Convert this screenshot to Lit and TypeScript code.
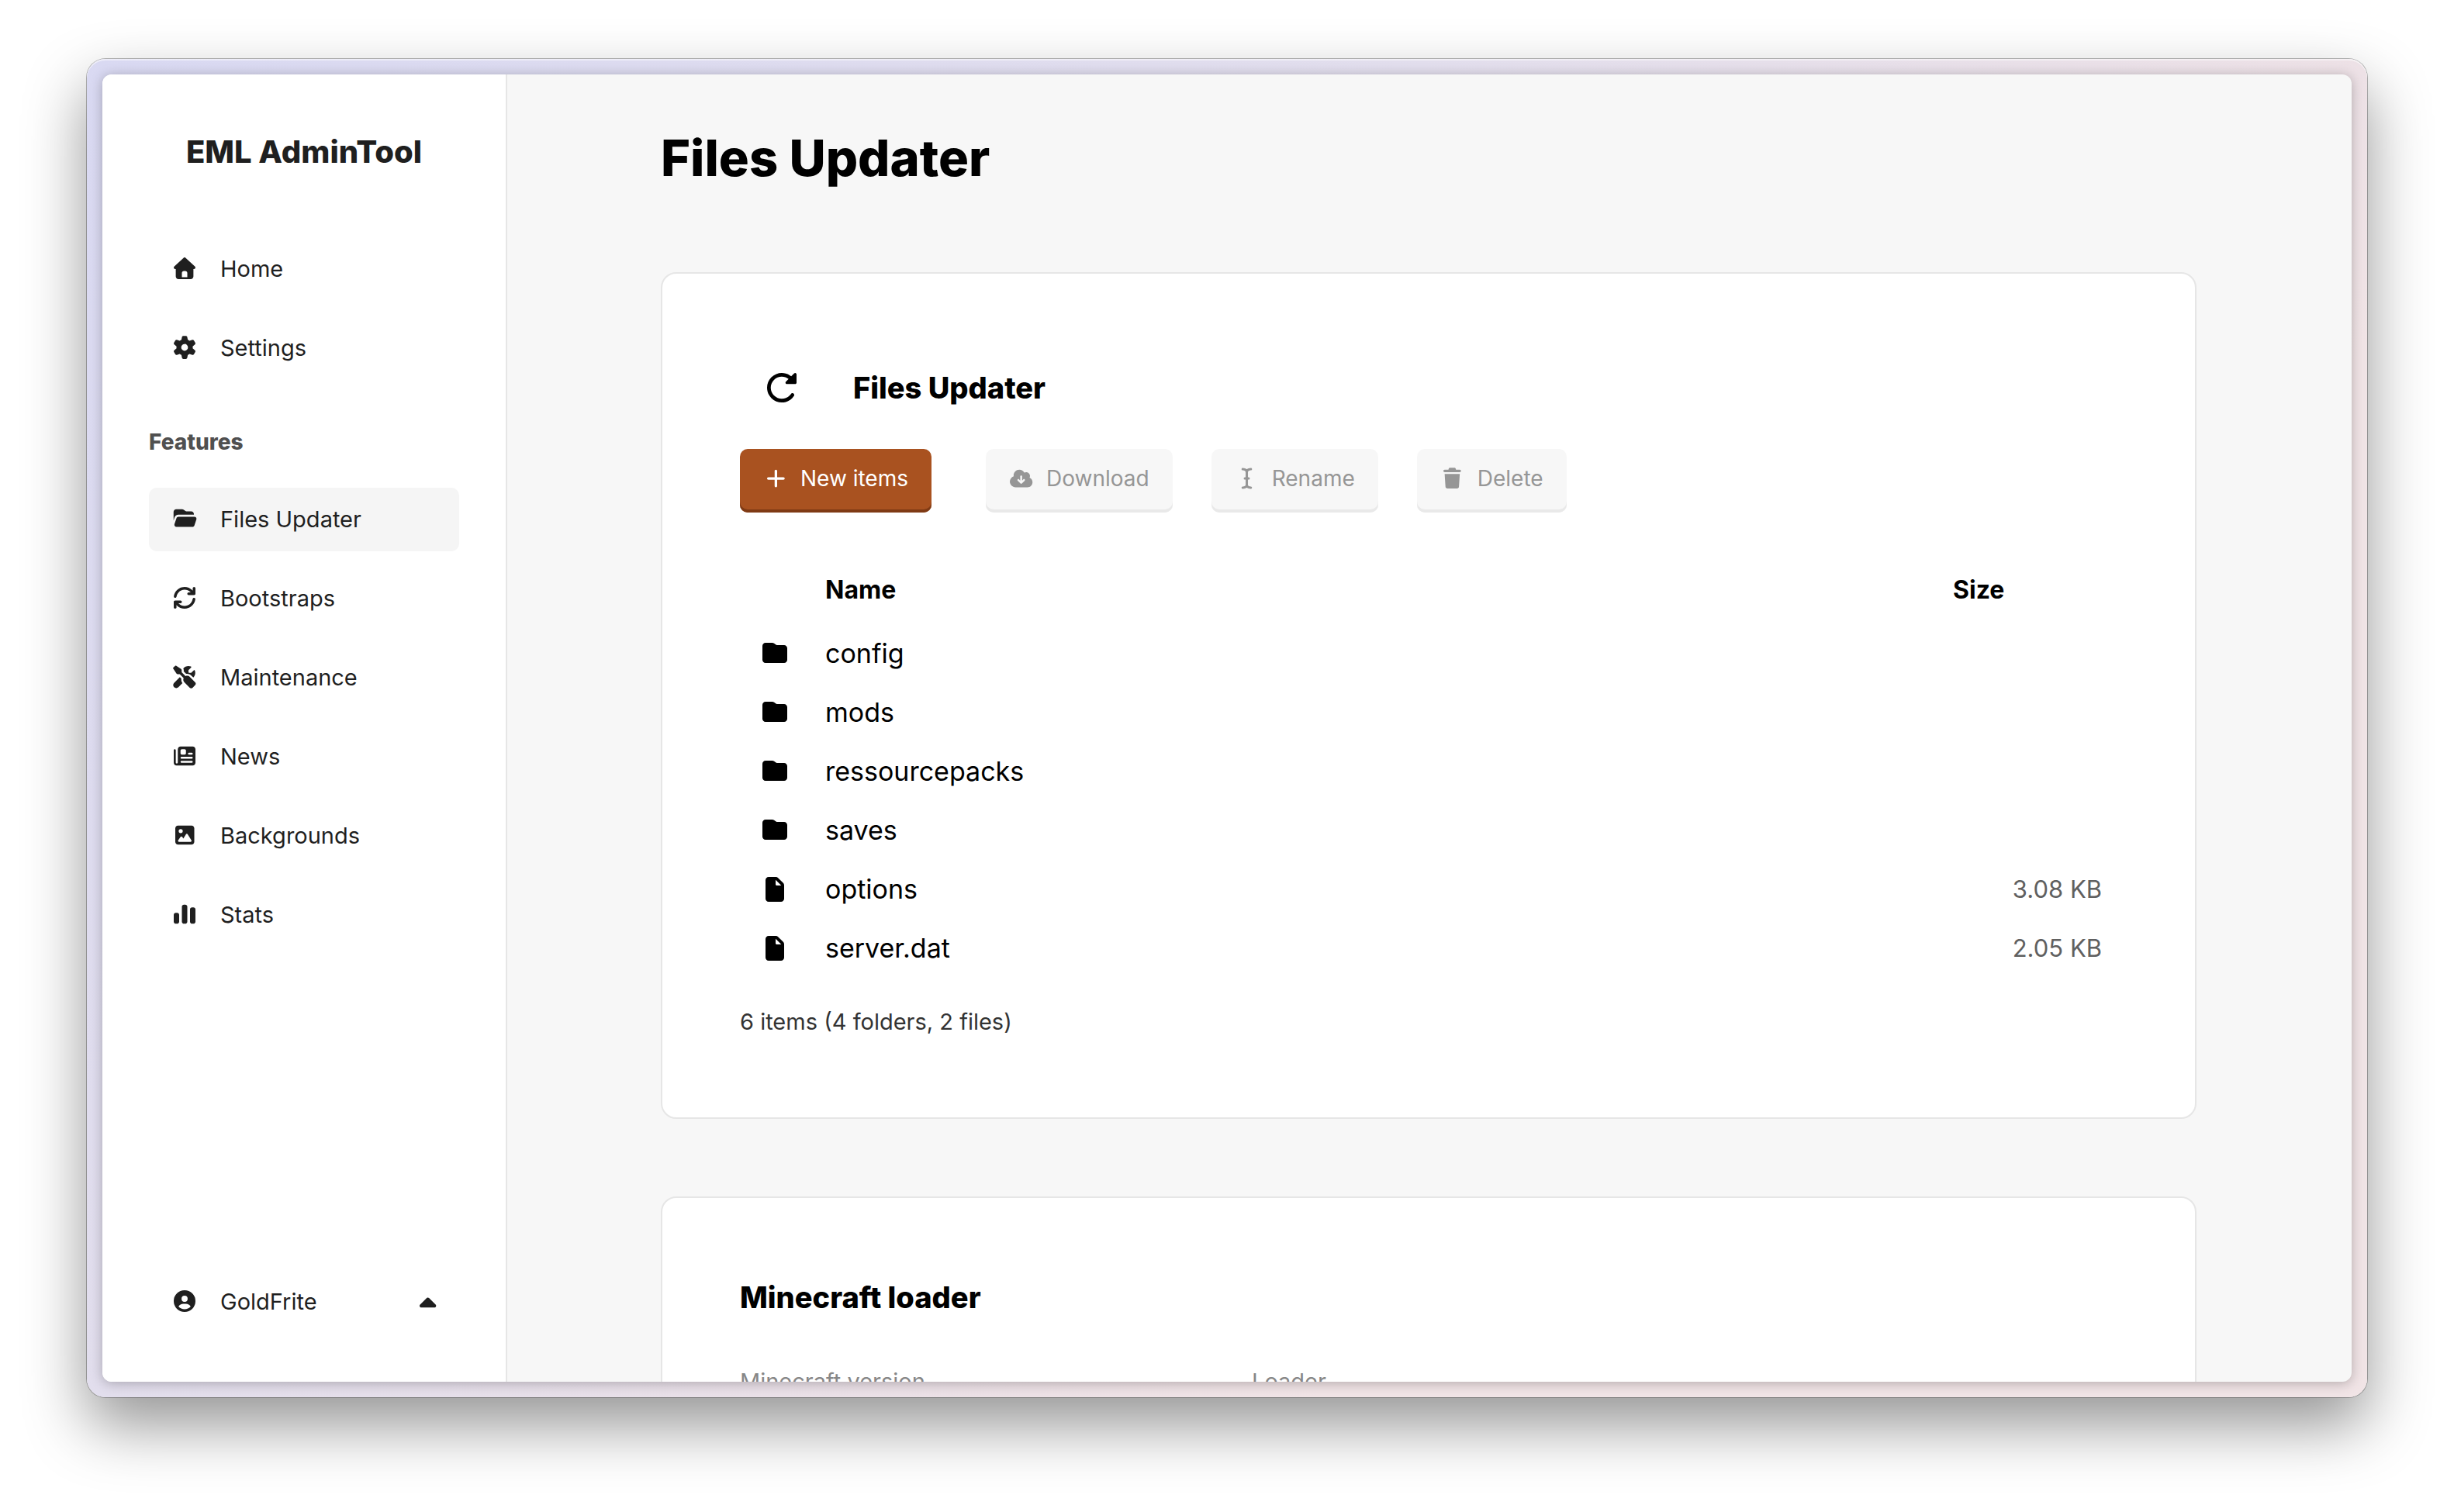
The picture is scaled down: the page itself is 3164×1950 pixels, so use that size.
import { LitElement, html, css, svg } from "lit";
import { customElement, property, state } from "lit/decorators.js";
import { classMap } from "lit/directives/class-map.js";

interface IconShape {
  w: number;
  d?: string;
  stroke?: string;
}

const ICONS: Record<string, IconShape> = {
  house: {
    w: 512,
    d: "M277.8 8.6c-12.3-11.4-31.3-11.4-43.5 0l-224 208c-9.6 9-12.8 22.9-8 35.1S18.8 272 32 272l16 0 0 176c0 35.3 28.7 64 64 64l288 0c35.3 0 64-28.7 64-64l0-176 16 0c13.2 0 25-8.1 29.8-20.3s1.6-26.2-8-35.1l-224-208zM240 320l32 0c26.5 0 48 21.5 48 48l0 96-128 0 0-96c0-26.5 21.5-48 48-48z",
  },
  gear: {
    w: 512,
    d: "M195.1 9.5C198.1-5.3 211.2-16 226.4-16l59.8 0c15.2 0 28.3 10.7 31.3 25.5L332 79.5c14.1 6 27.3 13.7 39.3 22.8l67.8-22.5c14.4-4.8 30.2 1.2 37.8 14.4l29.9 51.8c7.6 13.2 4.9 29.8-6.5 39.9L447 233.3c.9 7.4 1.3 15 1.3 22.7s-.5 15.3-1.3 22.7l53.4 47.5c11.4 10.1 14 26.8 6.5 39.9l-29.9 51.8c-7.6 13.1-23.4 19.2-37.8 14.4l-67.8-22.5c-12.1 9.1-25.3 16.7-39.3 22.8l-14.4 69.9c-3.1 14.9-16.2 25.5-31.3 25.5l-59.8 0c-15.2 0-28.3-10.7-31.3-25.5l-14.4-69.9c-14.1-6-27.2-13.7-39.3-22.8L73.5 432.3c-14.4 4.8-30.2-1.2-37.8-14.4L5.8 366.1c-7.6-13.2-4.9-29.8 6.5-39.9l53.4-47.5c-.9-7.4-1.3-15-1.3-22.7s.5-15.3 1.3-22.7L12.3 185.8c-11.4-10.1-14-26.8-6.5-39.9L35.7 94.1c7.6-13.2 23.4-19.2 37.8-14.4l67.8 22.5c12.1-9.1 25.3-16.7 39.3-22.8L195.1 9.5zM256.3 336a80 80 0 1 0 -.6-160 80 80 0 1 0 .6 160z",
  },
  folderOpen: {
    w: 576,
    d: "M56 225.6L32.4 296.2 32.4 96c0-35.3 28.7-64 64-64l138.7 0c13.8 0 27.3 4.5 38.4 12.8l38.4 28.8c5.5 4.2 12.3 6.4 19.2 6.4l117.3 0c35.3 0 64 28.7 64 64l0 16-365.4 0c-41.3 0-78 26.4-91.1 65.6zM477.8 448L99 448c-32.8 0-55.9-32.1-45.5-63.2l48-144C108 221.2 126.4 208 147 208l378.8 0c32.8 0 55.9 32.1 45.5 63.2l-48 144c-6.5 19.6-24.9 32.8-45.5 32.8z",
  },
  sync: {
    w: 512,
    d: "M65.9 228.5c13.3-93 93.4-164.5 190.1-164.5 53 0 101 21.5 135.8 56.2 .2 .2 .4 .4 .6 .6l7.6 7.2-47.9 0c-17.7 0-32 14.3-32 32s14.3 32 32 32l128 0c17.7 0 32-14.3 32-32l0-128c0-17.7-14.3-32-32-32s-32 14.3-32 32l0 53.4-11.3-10.7C390.5 28.6 326.5 0 256 0 127 0 20.3 95.4 2.6 219.5 .1 237 12.2 253.2 29.7 255.7s33.7-9.7 36.2-27.1zm443.5 64c2.5-17.5-9.7-33.7-27.1-36.2s-33.7 9.7-36.2 27.1c-13.3 93-93.4 164.5-190.1 164.5-53 0-101-21.5-135.8-56.2-.2-.2-.4-.4-.6-.6l-7.6-7.2 47.9 0c17.7 0 32-14.3 32-32s-14.3-32-32-32L32 320c-8.5 0-16.7 3.4-22.7 9.5S-.1 343.7 0 352.3l1 127c.1 17.7 14.6 31.9 32.3 31.7S65.2 496.4 65 478.7l-.4-51.5 10.7 10.1c46.3 46.1 110.2 74.7 180.7 74.7 129 0 235.7-95.4 253.4-219.5z",
  },
  tools: {
    w: 576,
    d: "M70.8-6.7c5.4-5.4 13.8-6.2 20.2-2L209.9 70.5c8.9 5.9 14.2 15.9 14.2 26.6l0 49.6 90.8 90.8c33.3-15 73.9-8.9 101.2 18.5L542.2 382.1c18.7 18.7 18.7 49.1 0 67.9l-60.1 60.1c-18.7 18.7-49.1 18.7-67.9 0L288.1 384c-27.4-27.4-33.5-67.9-18.5-101.2l-90.8-90.8-49.6 0c-10.7 0-20.7-5.3-26.6-14.2L23.4 58.9c-4.2-6.3-3.4-14.8 2-20.2L70.8-6.7zm145 303.5c-6.3 36.9 2.3 75.9 26.2 107.2l-94.9 95c-28.1 28.1-73.7 28.1-101.8 0s-28.1-73.7 0-101.8l135.4-135.5 35.2 35.1zM384.1 0c20.1 0 39.4 3.7 57.1 10.5 10 3.8 11.8 16.5 4.3 24.1L388.8 91.3c-3 3-4.7 7.1-4.7 11.3l0 41.4c0 8.8 7.2 16 16 16l41.4 0c4.2 0 8.3-1.7 11.3-4.7l56.7-56.7c7.6-7.5 20.3-5.7 24.1 4.3 6.8 17.7 10.5 37 10.5 57.1 0 43.2-17.2 82.3-45 111.1l-49.1-49.1c-33.1-33-78.5-45.7-121.1-38.4l-56.8-56.8 0-29.7-.2-5c-.8-12.4-4.4-24.3-10.5-34.9 29.4-35 73.4-57.2 122.7-57.3z",
  },
  newspaper: {
    w: 512,
    d: "M0 416L0 120c0-13.3 10.7-24 24-24s24 10.7 24 24l0 288c0 13.3 10.7 24 24 24s24-10.7 24-24L96 96c0-35.3 28.7-64 64-64l288 0c35.3 0 64 28.7 64 64l0 320c0 35.3-28.7 64-64 64L64 480c-35.3 0-64-28.7-64-64zM160 128l0 64c0 17.7 14.3 32 32 32l64 0c17.7 0 32-14.3 32-32l0-64c0-17.7-14.3-32-32-32l-64 0c-17.7 0-32 14.3-32 32zM360 176a24 24 0 1 0 0 48l64 0a24 24 0 1 0 0-48zM184 272a24 24 0 1 0 0 48l240 0a24 24 0 1 0 0-48zM184 368a24 24 0 1 0 0 48l240 0a24 24 0 1 0 0-48z",
  },
  image: {
    w: 448,
    d: "M64 32C28.7 32 0 60.7 0 96L0 416c0 35.3 28.7 64 64 64l320 0c35.3 0 64-28.7 64-64l0-320c0-35.3-28.7-64-64-64L64 32zm64 80a48 48 0 1 1 0 96 48 48 0 1 1 0-96zM272 224c8.4 0 16.1 4.4 20.5 11.5l88 144c4.5 7.4 4.7 16.7 .5 24.3S368.7 416 360 416L88 416c-8.9 0-17.2-5-21.3-12.9s-3.5-17.5 1.6-24.8l56-80c4.5-6.4 11.8-10.2 19.7-10.2s15.2 3.8 19.7 10.2l26.4 37.8 61.4-100.5c4.4-7.1 12.1-11.5 20.5-11.5z",
  },
  chart: {
    w: 512,
    d: "M240 32l32 0c26.5 0 48 21.5 48 48l0 352c0 26.5-21.5 48-48 48l-32 0c-26.5 0-48-21.5-48-48l0-352c0-26.5 21.5-48 48-48zM48 224l32 0c26.5 0 48 21.5 48 48l0 160c0 26.5-21.5 48-48 48l-32 0c-26.5 0-48-21.5-48-48L0 272c0-26.5 21.5-48 48-48zM432 96l32 0c26.5 0 48 21.5 48 48l0 288c0 26.5-21.5 48-48 48l-32 0c-26.5 0-48-21.5-48-48l0-288c0-26.5 21.5-48 48-48z",
  },
  user: {
    w: 512,
    d: "M399 384.2C376.9 345.8 335.4 320 288 320l-64 0c-47.4 0-88.9 25.8-111 64.2 35.2 39.2 86.2 63.8 143 63.8s107.8-24.7 143-63.8zM0 256a256 256 0 1 1 512 0 256 256 0 1 1 -512 0zm256 16a72 72 0 1 0 0-144 72 72 0 1 0 0 144z",
  },
  caretUp: {
    w: 320,
    d: "M140.3 135.2c12.6-10.3 31.1-9.5 42.8 2.2l128 128c9.2 9.2 11.9 22.9 6.9 34.9S301.4 320 288.5 320l-256 0c-12.9 0-24.6-7.8-29.6-19.8S.7 274.5 9.9 265.4l128-128 2.4-2.2z",
  },
  rotate: {
    w: 512,
    d: "M488 192l-144 0c-9.7 0-18.5-5.8-22.2-14.8s-1.7-19.3 5.2-26.2l46.7-46.7c-75.3-58.6-184.3-53.3-253.5 15.9-75 75-75 196.5 0 271.5s196.5 75 271.5 0c8.2-8.2 15.5-16.9 21.9-26.1 10.1-14.5 30.1-18 44.6-7.9s18 30.1 7.9 44.6c-8.5 12.2-18.2 23.8-29.1 34.7-100 100-262.1 100-362 0S-25 175 75 75c94.3-94.3 243.7-99.6 344.3-16.2L471 7c6.9-6.9 17.2-8.9 26.2-5.2S512 14.3 512 24l0 144c0 13.3-10.7 24-24 24z",
  },
  plus: {
    w: 448,
    d: "M256 64c0-17.7-14.3-32-32-32s-32 14.3-32 32l0 160-160 0c-17.7 0-32 14.3-32 32s14.3 32 32 32l160 0 0 160c0 17.7 14.3 32 32 32s32-14.3 32-32l0-160 160 0c17.7 0 32-14.3 32-32s-14.3-32-32-32l-160 0 0-160z",
  },
  cloud: {
    w: 576,
    d: "M144 480c-79.5 0-144-64.5-144-144 0-63.4 41-117.2 97.9-136.5-1.3-7.7-1.9-15.5-1.9-23.5 0-79.5 64.5-144 144-144 55.4 0 103.5 31.3 127.6 77.1 14.2-8.3 30.8-13.1 48.4-13.1 53 0 96 43 96 96 0 15.7-3.8 30.6-10.5 43.7 44 20.3 74.5 64.7 74.5 116.3 0 70.7-57.3 128-128 128l-304 0zM377 313c9.4-9.4 9.4-24.6 0-33.9s-24.6-9.4-33.9 0l-31 31 0-102.1c0-13.3-10.7-24-24-24s-24 10.7-24 24l0 102.1-31-31c-9.4-9.4-24.6-9.4-33.9 0s-9.4 24.6 0 33.9l72 72c9.4 9.4 24.6 9.4 33.9 0l72-72z",
  },
  cursor: {
    w: 256,
    stroke: "M24 20C80 24 128 46 128 96L128 416C128 466 80 488 24 492M232 20C176 24 128 46 128 96M128 416C128 466 176 488 232 492M80 256L176 256",
  },
  trash: {
    w: 448,
    d: "M136.7 5.9L128 32 32 32C14.3 32 0 46.3 0 64S14.3 96 32 96l384 0c17.7 0 32-14.3 32-32s-14.3-32-32-32l-96 0-8.7-26.1C306.9-7.2 294.7-16 280.9-16L167.1-16c-13.8 0-26 8.8-30.4 21.9zM416 144L32 144 53.1 467.1C54.7 492.4 75.7 512 101 512L347 512c25.3 0 46.3-19.6 47.9-44.9L416 144z",
  },
  folder: {
    w: 512,
    d: "M64 448l384 0c35.3 0 64-28.7 64-64l0-240c0-35.3-28.7-64-64-64L298.7 80c-6.9 0-13.7-2.2-19.2-6.4L241.1 44.8C230 36.5 216.5 32 202.7 32L64 32C28.7 32 0 60.7 0 96L0 384c0 35.3 28.7 64 64 64z",
  },
  file: {
    w: 384,
    d: "M0 64C0 28.7 28.7 0 64 0L213.5 0c17 0 33.3 6.7 45.3 18.7L365.3 125.3c12 12 18.7 28.3 18.7 45.3L384 448c0 35.3-28.7 64-64 64L64 512c-35.3 0-64-28.7-64-64L0 64zm208-5.5l0 93.5c0 13.3 10.7 24 24 24L325.5 176 208 58.5z",
  },
};

/** Draws one glyph, one em high and centred in a box set by the host's width. */
@customElement("app-icon")
export class AppIcon extends LitElement {
  @property() name = "";

  static styles = css`
    :host {
      display: inline-flex;
      justify-content: center;
      align-items: center;
      flex: none;
      height: 1em;
      line-height: 1;
    }
    .glyph {
      display: block;
      height: 1em;
      flex: none;
      overflow: visible;
      fill: currentColor;
      fill-rule: evenodd;
    }
    .line {
      fill: none;
      stroke: currentColor;
      stroke-width: 60;
      stroke-linecap: round;
      stroke-linejoin: round;
    }
  `;

  render() {
    const icon = ICONS[this.name];
    if (!icon) return null;
    return html`<svg class="glyph" viewBox="0 0 ${icon.w} 512" aria-hidden="true">
      ${icon.d ? svg`<path d=${icon.d}></path>` : svg`<path class="line" d=${icon.stroke}></path>`}
    </svg>`;
  }
}

interface NavItem {
  icon: string;
  label: string;
}

const MAIN_NAV: NavItem[] = [
  { icon: "house", label: "Home" },
  { icon: "gear", label: "Settings" },
];

const FEATURE_NAV: NavItem[] = [
  { icon: "folderOpen", label: "Files Updater" },
  { icon: "sync", label: "Bootstraps" },
  { icon: "tools", label: "Maintenance" },
  { icon: "newspaper", label: "News" },
  { icon: "image", label: "Backgrounds" },
  { icon: "chart", label: "Stats" },
];

@customElement("app-sidebar")
export class AppSidebar extends LitElement {
  @state() private current = "Files Updater";

  static styles = css`
    :host {
      display: flex;
      flex-direction: column;
      box-sizing: border-box;
      flex: none;
      width: 522px;
      padding: 70px 60px 62px;
      border-right: 2px solid #e6e6e6;
      background: #fff;
      color: #1f1f1f;
    }
    .brand {
      margin: 0 0 80px;
      font-size: 40px;
      line-height: 60px;
      font-weight: 800;
      text-align: center;
      white-space: nowrap;
    }
    .group {
      display: flex;
      flex-direction: column;
      gap: 20px;
    }
    .caption {
      margin: 59px 0 38px;
      font-size: 28px;
      line-height: 42px;
      font-weight: 800;
      color: #505050;
    }
    .item {
      display: flex;
      align-items: center;
      box-sizing: border-box;
      width: 100%;
      height: 82px;
      padding: 0 30px 2px;
      border: 0;
      border-radius: 10px;
      background: none;
      color: inherit;
      font: inherit;
      font-size: 29px;
      text-align: left;
      text-decoration: none;
      cursor: pointer;
    }
    .active {
      background: #f5f5f5;
    }
    .icon {
      width: 32px;
      margin-right: 30px;
      font-size: 28px;
    }
    .account {
      margin-top: auto;
    }
    .caret {
      margin: 8px 0 0 auto;
      font-size: 34px;
    }
  `;

  private link(item: NavItem) {
    const active = item.label === this.current;
    return html`<a
      href="#"
      class=${classMap({ item: true, active })}
      aria-current=${active ? "page" : "false"}
      @click=${(e: Event) => {
        e.preventDefault();
        this.current = item.label;
      }}
      ><app-icon class="icon" name=${item.icon}></app-icon>${item.label}</a
    >`;
  }

  render() {
    return html`
      <h2 class="brand">EML AdminTool</h2>
      <nav class="group">${MAIN_NAV.map((i) => this.link(i))}</nav>
      <h3 class="caption">Features</h3>
      <nav class="group">${FEATURE_NAV.map((i) => this.link(i))}</nav>
      <button class="item account" type="button">
        <app-icon class="icon" name="user"></app-icon>GoldFrite
        <app-icon class="caret" name="caretUp"></app-icon>
      </button>
    `;
  }
}

interface FileEntry {
  name: string;
  folder: boolean;
  size?: string;
}

const FILES: FileEntry[] = [
  { name: "config", folder: true },
  { name: "mods", folder: true },
  { name: "ressourcepacks", folder: true },
  { name: "saves", folder: true },
  { name: "options", folder: false, size: "3.08 KB" },
  { name: "server.dat", folder: false, size: "2.05 KB" },
];

@customElement("app-files")
export class AppFiles extends LitElement {
  static styles = css`
    :host {
      display: block;
    }
    .head {
      display: flex;
      align-items: center;
      gap: 38px;
      height: 94px;
      margin-bottom: 32px;
    }
    .refresh {
      display: flex;
      align-items: center;
      justify-content: center;
      width: 108px;
      height: 94px;
      padding: 0;
      border: 0;
      background: none;
      color: #000;
      font-size: 38px;
      cursor: pointer;
    }
    .title {
      margin: 0;
      font-size: 38px;
      line-height: 56px;
      font-weight: 800;
    }
    .actions {
      display: flex;
      gap: 50px;
    }
    .button {
      display: flex;
      align-items: center;
      gap: 16px;
      box-sizing: border-box;
      height: 82px;
      padding: 0 30px 6px;
      border: 0;
      border-radius: 10px;
      background: #f7f7f7;
      box-shadow: inset 0 -4px #e9e9e9;
      color: #969696;
      font: inherit;
      font-size: 28px;
      white-space: nowrap;
    }
    .primary {
      margin-right: 20px;
      background: #a95220;
      box-shadow: inset 0 -4px #7f3a14;
      color: #fff;
      cursor: pointer;
    }
    .mark {
      width: 32px;
      font-size: 26px;
    }
    .files {
      width: 100%;
      margin-top: 56px;
      border-collapse: collapse;
      table-layout: fixed;
      font-size: 34px;
      line-height: 48px;
      text-align: left;
    }
    .files th {
      height: 88px;
      padding: 0 20px;
      font-size: 32px;
      font-weight: 700;
    }
    .files td {
      height: 76px;
      padding: 0 20px;
    }
    .files .kind {
      width: 90px;
      padding: 0;
      font-size: 32px;
      text-align: center;
    }
    .kind app-icon {
      display: flex;
    }
    .weight {
      width: 192px;
    }
    .files td.weight {
      font-size: 31px;
      color: #606060;
      text-align: right;
    }
    .summary {
      margin: 35px 0 1px;
      font-size: 29px;
      line-height: 44px;
      color: #333;
    }
  `;

  render() {
    const folders = FILES.filter((f) => f.folder).length;
    return html`
      <header class="head">
        <button class="refresh" type="button" aria-label="Refresh">
          <app-icon name="rotate"></app-icon>
        </button>
        <h2 class="title">Files Updater</h2>
      </header>
      <div class="actions">
        <button class="button primary" type="button"><app-icon class="mark" name="plus"></app-icon>New items</button>
        <button class="button" type="button" disabled><app-icon class="mark" name="cloud"></app-icon>Download</button>
        <button class="button" type="button" disabled><app-icon class="mark" name="cursor"></app-icon>Rename</button>
        <button class="button" type="button" disabled><app-icon class="mark" name="trash"></app-icon>Delete</button>
      </div>
      <table class="files">
        <thead>
          <tr>
            <th class="kind"></th>
            <th>Name</th>
            <th class="weight">Size</th>
          </tr>
        </thead>
        <tbody>
          ${FILES.map(
            (f) => html`<tr>
              <td class="kind"><app-icon name=${f.folder ? "folder" : "file"}></app-icon></td>
              <td>${f.name}</td>
              <td class="weight">${f.size ?? ""}</td>
            </tr>`
          )}
        </tbody>
      </table>
      <p class="summary">${FILES.length} items (${folders} folders, ${FILES.length - folders} files)</p>
    `;
  }
}

@customElement("app-root")
export class AppRoot extends LitElement {
  static styles = css`
    :host {
      display: block;
      box-sizing: border-box;
      height: 100vh;
      padding: 76px 112px 148px;
      overflow: hidden;
      background: #fff;
      color: #000;
      font-family: Inter, "Open Sans", sans-serif;
    }
    .frame {
      box-sizing: border-box;
      height: 100%;
      padding: 20px;
      border-radius: 24px;
      background: linear-gradient(135deg, #d9d9f2 0%, #e2deed 37%, #ede1e6 63%, #f1e4e6 71%);
      box-shadow: inset 0 2px rgba(255, 255, 255, 0.5), 0 0 0 1px rgba(0, 0, 0, 0.28),
        0 36px 80px rgba(0, 0, 0, 0.42);
    }
    .window {
      display: flex;
      height: 100%;
      overflow: hidden;
      border-radius: 12px;
      background: #f7f7f7;
      box-shadow: 0 2px 16px rgba(0, 0, 0, 0.26);
    }
    .main {
      flex: 1;
      min-width: 0;
      box-sizing: border-box;
      padding: 60px 200px 100px 198px;
      overflow: auto;
      scrollbar-width: none;
    }
    .heading {
      margin: 0 0 99px;
      font-size: 65px;
      line-height: 96px;
      font-weight: 800;
    }
    .cards {
      display: flex;
      flex-direction: column;
      gap: 100px;
    }
    .card {
      padding: 100px;
      border: 2px solid #e6e6e6;
      border-radius: 20px;
      background: #fff;
    }
    .title {
      margin: 0 0 60px;
      font-size: 38px;
      line-height: 56px;
      font-weight: 800;
    }
    .fields {
      display: flex;
      gap: 100px;
    }
    .field {
      display: flex;
      flex-direction: column;
      gap: 12px;
      flex: 0 1 560px;
      font-size: 29px;
      line-height: 42px;
      color: #878787;
    }
    .select {
      height: 80px;
      border: 2px solid #e6e6e6;
      border-radius: 10px;
      background: #fff;
      font: inherit;
    }
  `;

  render() {
    return html`
      <div class="frame">
        <div class="window">
          <app-sidebar></app-sidebar>
          <main class="main">
            <h1 class="heading">Files Updater</h1>
            <div class="cards">
              <section class="card"><app-files></app-files></section>
              <section class="card">
                <h2 class="title">Minecraft loader</h2>
                <div class="fields">
                  <label class="field">Minecraft version<select class="select"></select></label>
                  <label class="field">Loader<select class="select"></select></label>
                </div>
              </section>
            </div>
          </main>
        </div>
      </div>
    `;
  }
}
